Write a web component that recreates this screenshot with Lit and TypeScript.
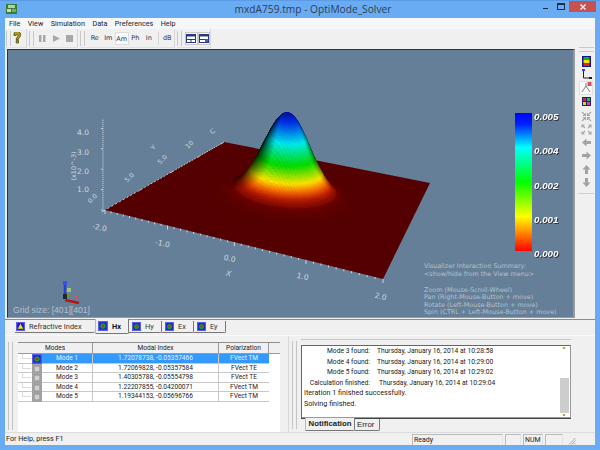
import { LitElement, css, html, svg, type TemplateResult } from 'lit';
import { customElement } from 'lit/decorators.js';

type Pt = [number, number];

// plate corners on screen: back, right, front, left
const P: Pt[] = [[224, 142], [430, 183], [383, 279], [105, 210]];
const O: Pt = [8, 50]; // origin of the svg in page coordinates

function makeHomography(p: Pt[]) {
  const [[x0, y0], [x1, y1], [x2, y2], [x3, y3]] = p;
  const dx1 = x1 - x2, dx2 = x3 - x2, dx3 = x0 - x1 + x2 - x3;
  const dy1 = y1 - y2, dy2 = y3 - y2, dy3 = y0 - y1 + y2 - y3;
  const det = dx1 * dy2 - dx2 * dy1;
  const g = (dx3 * dy2 - dx2 * dy3) / det;
  const h = (dx1 * dy3 - dx3 * dy1) / det;
  const a = x1 - x0 + g * x1, b = x3 - x0 + h * x3;
  const d = y1 - y0 + g * y1, e = y3 - y0 + h * y3;
  return (u: number, v: number): Pt => {
    const w = g * u + h * v + 1;
    return [(a * u + b * v + x0) / w, (d * u + e * v + y0) / w];
  };
}
const project = makeHomography(P);

const STOPS: [number, number, number, number][] = [
  [0, 85, 0, 0], [0.07, 104, 4, 0], [0.15, 185, 30, 0], [0.22, 250, 110, 0], [0.3, 255, 235, 0],
  [0.48, 0, 225, 0], [0.7, 0, 240, 240], [0.92, 0, 50, 235], [1, 0, 20, 170],
];

function colorAt(t: number, shade: number): string {
  let i = 0;
  while (i < STOPS.length - 2 && t > STOPS[i + 1][0]) i++;
  const a = STOPS[i], b = STOPS[i + 1];
  const f = Math.min(1, (t - a[0]) / (b[0] - a[0]));
  const c = [1, 2, 3].map((k) => Math.round((a[k] + (b[k] - a[k]) * f) * shade));
  return `rgb(${c[0]},${c[1]},${c[2]})`;
}

const SIGMA = 0.092;
const HEIGHT = 82;

function height(u: number, v: number): number {
  const du = u - 0.5, dv = v - 0.5;
  return Math.exp(-(du * du + dv * dv) / (2 * SIGMA * SIGMA));
}

function surfacePoint(u: number, v: number): Pt {
  const [x, y] = project(u, v);
  const t = height(u, v);
  return [x + 2 * t - O[0], y - HEIGHT * t - O[1]];
}

function shadeAt(u: number, v: number): number {
  const t = height(u, v);
  const k = 0.34;
  const nx = (k * t * (u - 0.5)) / (SIGMA * SIGMA);
  const ny = (k * t * (v - 0.5)) / (SIGMA * SIGMA);
  const len = Math.hypot(nx, ny, 1);
  const lit = (nx * 0.32 + ny * 0.5 + 0.8) / (len * Math.hypot(0.32, 0.5, 0.8));
  const flat = 0.8 / Math.hypot(0.32, 0.5, 0.8);
  const s = Math.max(0, lit) / flat;
  return Math.min(1, Math.pow(s, 1.7) * 1.25);
}

function buildSurface(): TemplateResult[] {
  const N = 120, lo = 0.2, span = 0.6;
  const quads: { y: number; pts: string; fill: string }[] = [];
  for (let i = 0; i < N; i++) {
    for (let j = 0; j < N; j++) {
      const u0 = lo + (span * i) / N, u1 = lo + (span * (i + 1)) / N;
      const v0 = lo + (span * j) / N, v1 = lo + (span * (j + 1)) / N;
      const um = (u0 + u1) / 2, vm = (v0 + v1) / 2;
      if (height(um, vm) < 0.004) continue; // flat enough to be the plate itself
      const pts = [surfacePoint(u0, v0), surfacePoint(u1, v0), surfacePoint(u1, v1), surfacePoint(u0, v1)]
        .map((p) => `${p[0].toFixed(1)},${p[1].toFixed(1)}`).join(' ');
      quads.push({ y: project(um, vm)[1], pts, fill: colorAt(height(um, vm), shadeAt(um, vm)) });
    }
  }
  quads.sort((a, b) => a.y - b.y);
  return quads.map((q) => svg`<polygon points=${q.pts} fill=${q.fill} stroke=${q.fill} stroke-width="0.5"></polygon>`);
}

function buildTicks(): TemplateResult[] {
  const out: TemplateResult[] = [];
  for (let i = 0; i <= 40; i++) {
    const [x, y] = project(i / 40, 1).map((n, k) => n - O[k]);
    const [x2, y2] = project(0, 1 - i / 40).map((n, k) => n - O[k]);
    const big = i % 10 === 0;
    out.push(svg`<line x1=${x} y1=${y} x2=${x} y2=${y + (big ? 4 : 2)} class="tick"></line>`);
    out.push(svg`<line x1=${x2} y1=${y2} x2=${x2 - (big ? 3 : 1.5)} y2=${y2 + (big ? 2 : 1)} class="tick"></line>`);
  }
  for (let i = 0; i <= 44; i++) {
    const y = 210 - O[1] - i * 2.04;
    out.push(svg`<line x1=${103.5 - O[0]} y1=${y} x2=${(i % 10 === 0 ? 101 : 102.4) - O[0]} y2=${y} class="tick"></line>`);
  }
  return out;
}

const plateShape = P.map((p) => `${p[0] - O[0]},${p[1] - O[1]}`).join(' ');
const surface = buildSurface();
const ticks = buildTicks();

const fieldIcon = (inner: 'field' | 'tri' | 'gray', size = 11): TemplateResult => html`
  <svg width=${size} height=${size} viewBox="0 0 11 11">
    ${inner === 'gray'
      ? svg`<rect width="11" height="11" fill="#a2a2a2"></rect><rect x="2.5" y="2.5" width="6" height="6" rx="1" fill="#d0d0d0" stroke="#8a8a8a" stroke-width=".6"></rect>`
      : svg`<rect width="11" height="11" fill="#5a5aee"></rect><rect x="1.5" y="1.5" width="8" height="8" fill="#1414d8"></rect>`}
    ${inner === 'field' ? svg`<circle cx="5.5" cy="5.5" r="3.1" fill="#10a020"></circle><circle cx="5.5" cy="5.5" r="1.3" fill="#d82020"></circle>` : ''}
    ${inner === 'tri' ? svg`<path d="M5.5 2.2 L8.8 8.4 H2.2 Z" fill="#f4e800"></path>` : ''}
  </svg>`;

const MODES = [
  ['Mode 1', '1.72078738, -0.05357466', 'FVect TM'],
  ['Mode 2', '1.72069828, -0.05357584', 'FVect TE'],
  ['Mode 3', '1.40305788, -0.05554798', 'FVect TE'],
  ['Mode 4', '1.22207855, -0.04200071', 'FVect TM'],
  ['Mode 5', '1.19344153, -0.05696766', 'FVect TM'],
];

const LOG = [
  ['Mode 3 found:', 'Thursday, January 16, 2014 at 10:28:58'],
  ['Mode 4 found:', 'Thursday, January 16, 2014 at 10:29:00'],
  ['Mode 5 found:', 'Thursday, January 16, 2014 at 10:29:02'],
  ['Calculation finished:', 'Thursday, January 16, 2014 at 10:29:04'],
];

const arrow = (rot: number): TemplateResult => html`
  <svg width="11" height="11" viewBox="0 0 11 11"><path transform="rotate(${rot} 5.5 5.5)" d="M1 5.5 L5.5 1.5 V4 H10 V7 H5.5 V9.5 Z" fill="#a3a3a3"></path></svg>`;

@customElement('app-root')
export class AppRoot extends LitElement {
  private renderPlot(): TemplateResult {
    return html`
      <svg class="plot" width="565" height="267" viewBox="0 0 565 267">
        <defs>
          <linearGradient id="bar" x1="0" y1="0" x2="0" y2="1">
            <stop offset="0" stop-color="#0000ff"></stop>
            <stop offset="0.08" stop-color="#0020ff"></stop>
            <stop offset="0.25" stop-color="#00ffff"></stop>
            <stop offset="0.5" stop-color="#00ff00"></stop>
            <stop offset="0.75" stop-color="#ffff00"></stop>
            <stop offset="1" stop-color="#ff0000"></stop>
          </linearGradient>
          <filter id="soft" x="-5%" y="-5%" width="110%" height="110%"><feGaussianBlur stdDeviation="0.7"></feGaussianBlur></filter>
        </defs>
        <polygon points=${plateShape} fill="#550000"></polygon>
        <g filter="url(#soft)">${surface}</g>
        ${ticks}
        <text class="ax" x="69" y="85">4.0</text>
        <text class="ax" x="69" y="104.5">3.0</text>
        <text class="ax" x="69" y="124">2.0</text>
        <text class="ax" x="69" y="142">1.0</text>
        <text class="ax sm" transform="translate(68 116) rotate(-90)" text-anchor="middle">(x10^-3)</text>
        <text class="ax sm" transform="translate(86 150) rotate(-45)" text-anchor="middle">0.0</text>
        <text class="ax sm" transform="translate(123 129) rotate(-45)" text-anchor="middle">5.0</text>
        <text class="ax sm" transform="translate(156 111) rotate(-45)" text-anchor="middle">5.0</text>
        <text class="ax sm" transform="translate(183 96) rotate(-45)" text-anchor="middle">10</text>
        <text class="ax sm" transform="translate(147 99) rotate(-45)" text-anchor="middle">Y</text>
        <text class="ax sm" transform="translate(206 83) rotate(-45)" text-anchor="middle">C</text>
        <text class="ax" transform="translate(91 180) rotate(12)" text-anchor="middle">-2.0</text>
        <text class="ax" transform="translate(154 196) rotate(12)" text-anchor="middle">-1.0</text>
        <text class="ax" transform="translate(221 211) rotate(12)" text-anchor="middle">0.0</text>
        <text class="ax" transform="translate(220 226) rotate(12)" text-anchor="middle" font-style="italic">X</text>
        <text class="ax" transform="translate(294 229) rotate(12)" text-anchor="middle">1.0</text>
        <text class="ax" transform="translate(372 249) rotate(12)" text-anchor="middle">2.0</text>

        <g>
          <line x1="57" y1="247" x2="57" y2="233" stroke="#2a3fd0" stroke-width="2.5"></line>
          <line x1="57" y1="250" x2="71" y2="253" stroke="#b01818" stroke-width="2.5"></line>
          <line x1="57" y1="249" x2="62" y2="243" stroke="#6f9a3a" stroke-width="2"></line>
          <rect x="55" y="244" width="4" height="5" fill="#202a20"></rect>
          <rect x="59" y="238" width="4" height="4" fill="#9fc47a"></rect>
          <rect x="67" y="245" width="3" height="4" fill="#e05050"></rect>
          <rect x="55" y="231" width="4" height="4" fill="#3a50e8"></rect>
        </g>

        <rect x="507" y="63" width="17" height="138" fill="url(#bar)"></rect>
        <text class="bar-label" x="526" y="70">0.005</text>
        <text class="bar-label" x="526" y="104">0.004</text>
        <text class="bar-label" x="526" y="139">0.002</text>
        <text class="bar-label" x="526" y="173">0.001</text>
        <text class="bar-label" x="526" y="207">0.000</text>

        <text class="note" x="416" y="218">Visualizer Interaction Summary:</text>
        <text class="note" x="416" y="225.5">&lt;show/hide from the View menu&gt;</text>
        <text class="note" x="416" y="242">Zoom (Mouse-Scroll-Wheel)</text>
        <text class="note" x="416" y="249">Pan (Right-Mouse-Button + move)</text>
        <text class="note" x="416" y="257">Rotate (Left-Mouse-Button + move)</text>
        <text class="note" x="416" y="264">Spin (CTRL + Left-Mouse-Button + move)</text>
        <text class="note grid" x="5" y="263">Grid size: [401][401]</text>
      </svg>`;
  }

  private renderToolbar(): TemplateResult {
    return html`
      <div class="toolbar">
        <div class="tgroup g-key">
          <i class="grip"></i>
          <svg width="9" height="12" viewBox="0 0 9 12"><path d="M1 3.5 A3.4 3.4 0 1 1 7.5 3.5 C7.5 5.5 5.5 5.5 5.5 7.5 H3.2 C3.2 5 5 5 5 3.5 A1 1 0 0 0 3 3.5 Z M3.2 8.5 H5.5 V11 H3.2 Z" fill="#b09a18" stroke="#3c3c00" stroke-width=".7"></path></svg>
        </div>
        <div class="tgroup g-run">
          <i class="grip"></i>
          <span class="gbtn"><svg width="7" height="7"><rect x="0" y="0" width="2.5" height="7" fill="#a8a8a8"></rect><rect x="4" y="0" width="2.5" height="7" fill="#a8a8a8"></rect></svg></span>
          <span class="gbtn"><svg width="7" height="7"><path d="M0 0 L7 3.5 L0 7 Z" fill="#a8a8a8"></path></svg></span>
          <span class="gbtn"><svg width="7" height="7"><rect width="7" height="7" fill="#a8a8a8"></rect></svg></span>
        </div>
        <div class="tgroup g-parts">
          <i class="grip"></i>
          <span class="tbtn">Re</span><span class="tbtn">Im</span><span class="tbtn on">Am</span><span class="tbtn">Ph</span><span class="tbtn">In</span>
          <i class="vsep"></i>
          <span class="tbtn">dB</span>
        </div>
        <div class="tgroup g-layout">
          <i class="grip"></i>
          <span class="lbtn"><svg width="10" height="9" viewBox="0 0 10 9"><rect x=".5" y=".5" width="9" height="8" fill="#fff" stroke="#2a3a80"></rect><rect x=".5" y=".5" width="9" height="2" fill="#2a3a80"></rect><line x1="0" y1="5.5" x2="10" y2="5.5" stroke="#2a3a80"></line><line x1="5" y1="5.5" x2="5" y2="9" stroke="#2a3a80"></line></svg></span>
          <span class="lbtn"><svg width="10" height="9" viewBox="0 0 10 9"><rect x=".5" y=".5" width="9" height="8" fill="#fff" stroke="#2a3a80"></rect><rect x=".5" y=".5" width="9" height="2" fill="#2a3a80"></rect><line x1="0" y1="5.5" x2="6" y2="5.5" stroke="#2a3a80"></line><rect x="6" y="5" width="3" height="3" fill="#4060c0"></rect></svg></span>
        </div>
      </div>`;
  }

  private renderSideBar(): TemplateResult {
    return html`
      <div class="sidebar">
        <i class="hgrip"></i>
        <span class="sbtn"><svg width="9" height="11" viewBox="0 0 9 11"><rect width="9" height="11" fill="#14148c"></rect><rect x="1.5" y="1" width="6" height="3" fill="#10b020"></rect><rect x="1.5" y="4" width="6" height="3" fill="#f0e000"></rect><rect x="1.5" y="7" width="6" height="3" fill="#e02010"></rect></svg></span>
        <span class="sbtn"><svg width="11" height="11" viewBox="0 0 11 11"><path d="M2.5 1 V9 H10" fill="none" stroke="#202020"></path><rect x="1" y="0" width="3" height="2" fill="#3040d0"></rect><rect x="8" y="8" width="3" height="2" fill="#202020"></rect></svg></span>
        <span class="sbtn on"><svg width="11" height="11" viewBox="0 0 11 11"><path d="M5 4 L1 10 M5 4 L9 10 M5 4 V1" fill="none" stroke="#808080"></path><rect x="6.5" y="0" width="4" height="4" fill="#e05060"></rect></svg></span>
        <span class="sbtn"><svg width="9" height="9" viewBox="0 0 9 9"><rect width="9" height="9" fill="#202080"></rect><rect x="1" y="1" width="3" height="3" fill="#e02020"></rect><rect x="5" y="1" width="3" height="3" fill="#20c030"></rect><rect x="1" y="5" width="3" height="3" fill="#e0d020"></rect><rect x="5" y="5" width="3" height="3" fill="#e04080"></rect></svg></span>
        <span class="sbtn nudge"><svg width="11" height="11" viewBox="0 0 11 11"><path d="M1 1 L4.5 4.5 M10 1 L6.5 4.5 M1 10 L4.5 6.5 M10 10 L6.5 6.5 M4.5 2 V4.5 H2 M6.5 2 V4.5 H9 M4.5 9 V6.5 H2 M6.5 9 V6.5 H9" fill="none" stroke="#a8a8a8" stroke-width="1.1"></path></svg></span>
        <span class="sbtn"><svg width="11" height="11" viewBox="0 0 11 11"><path d="M4 4 L1 1 M7 4 L10 1 M4 7 L1 10 M7 7 L10 10 M1 3.5 V1 H3.5 M7.5 1 H10 V3.5 M1 7.5 V10 H3.5 M7.5 10 H10 V7.5" fill="none" stroke="#a8a8a8" stroke-width="1.1"></path></svg></span>
        <span class="sbtn">${arrow(0)}</span>
        <span class="sbtn">${arrow(180)}</span>
        <span class="sbtn">${arrow(90)}</span>
        <span class="sbtn">${arrow(-90)}</span>
      </div>`;
  }

  private renderTable(): TemplateResult {
    return html`
      <div class="table">
        <div class="thead">
          <span class="h-name">Modes</span>
          <span class="h-index">Modal Index</span>
          <span class="h-pol">Polarization</span>
          <span class="fill"></span>
        </div>
        ${MODES.map((m, i) => html`
          <div class="trow ${i === 0 ? 'sel' : ''}">
            <span class="tree"><i class="branch"></i>${fieldIcon(i === 0 ? 'field' : 'gray', 10)}</span>
            <span class="c-name">${m[0]}</span>
            <span class="c-index">${m[1]}</span>
            <span class="c-pol">${m[2]}</span>
          </div>`)}
      </div>`;
  }

  private renderLog(): TemplateResult {
    return html`
      <div class="logwrap">
        <div class="log">
          <div class="lines">
            ${LOG.map((l) => html`<div class="line"><span class="lbl">${l[0]}</span><span>${l[1]}</span></div>`)}
            <div class="line plain">Iteration 1 finished successfully.</div>
            <div class="line plain">Solving finished.</div>
          </div>
          <div class="scroll">
            <span class="caret">&#x2C4;</span>
            <span class="thumb"></span>
            <span class="caret">&#x2C5;</span>
          </div>
        </div>
        <div class="logtabs">
          <span class="ltab on">Notification</span>
          <span class="ltab err">Error</span>
        </div>
      </div>`;
  }

  override render(): TemplateResult {
    return html`
      <div class="titlebar">
        <svg class="appicon" width="11" height="10" viewBox="0 0 11 10"><rect width="11" height="10" fill="#3b7a3f"></rect><rect x="2" y="1" width="7" height="3" fill="#a8d8a0"></rect><rect x="1" y="5" width="4" height="3" fill="#e0e070"></rect><rect x="6" y="5" width="4" height="3" fill="#6fb06f"></rect></svg>
        <span class="title">mxdA759.tmp - OptiMode_Solver</span>
        <span class="winbtn"><i class="min"></i></span>
        <span class="winbtn"><i class="max"></i></span>
        <span class="close"><svg width="6" height="6"><path d="M.5 .5 L5.5 5.5 M5.5 .5 L.5 5.5" stroke="#fff" stroke-width="1.3"></path></svg></span>
      </div>
      <div class="client">
        <div class="menu">
          ${['File', 'View', 'Simulation', 'Data', 'Preferences', 'Help'].map((m) => html`<span>${m}</span>`)}
        </div>
        ${this.renderToolbar()}
        <div class="main">
          <div class="view">${this.renderPlot()}</div>
          ${this.renderSideBar()}
        </div>
        <div class="tabs">
          <span class="tab wide">${fieldIcon('tri', 9)}Refractive Index</span>
          <span class="tab on">${fieldIcon('field', 10)}Hx</span>
          <span class="tab hy">${fieldIcon('field', 9)}Hy</span>
          <span class="tab">${fieldIcon('field', 9)}Ex</span>
          <span class="tab">${fieldIcon('field', 9)}Ey</span>
        </div>
        <div class="panes">
          <div class="pane-left"><i class="pgrip"></i>${this.renderTable()}</div>
          <div class="split"><i class="pgrip"></i></div>
          <div class="pane-right">${this.renderLog()}</div>
        </div>
        <div class="status">
          <span class="help">For Help, press F1</span>
          <span class="cell c-ready">Ready</span>
          <span class="cell c-a"></span>
          <span class="cell c-num">NUM</span>
          <span class="cell c-b"></span>
          <svg class="sizer" width="8" height="8" viewBox="0 0 8 8"><path d="M7.5 1 L1 7.5 M7.5 3.5 L3.5 7.5 M7.5 6 L6 7.5" stroke="#a8a8a8"></path></svg>
        </div>
      </div>
    `;
  }

  static override styles = css`
    :host {
      display: flex;
      flex-direction: column;
      width: 600px;
      height: 450px;
      background: #6aacf4;
      font-family: Roboto, 'Liberation Sans', sans-serif;
      font-size: 7px;
      color: #222;
      overflow: hidden;
    }
    i { display: block; font-style: normal; }

    .titlebar {
      height: 18px;
      display: flex;
      align-items: flex-start;
      box-sizing: border-box;
      padding-left: 6px;
      border-top: 1px solid #5a9be4;
    }
    .appicon { margin-top: 3px; }
    .title {
      flex: 1;
      text-align: center;
      font-family: 'Open Sans', sans-serif;
      font-size: 10.2px;
      line-height: 17px;
      color: #2c3e55;
      padding-left: 72px;
    }
    .winbtn { width: 16px; height: 11px; display: flex; align-items: center; justify-content: center; }
    .min { width: 5px; height: 1.5px; background: #1c2c40; margin-top: 4px; }
    .max { width: 6px; height: 4px; border: 1px solid #1c2c40; border-top-width: 2px; }
    .close {
      width: 27px;
      height: 11px;
      margin-right: 4px;
      background: #c75050;
      display: flex;
      align-items: center;
      justify-content: center;
    }

    .client {
      flex: 1;
      margin: 0 5px 5px;
      display: flex;
      flex-direction: column;
      background: #f0f0f0;
      min-height: 0;
    }
    .menu {
      height: 11px;
      background: #f5f6f7;
      display: flex;
      padding-left: 4px;
      gap: 7.5px;
      line-height: 11px;
      font-size: 7.2px;
    }

    .toolbar { height: 20px; display: flex; gap: 2px; padding-left: 1px; box-sizing: border-box; }
    .tgroup {
      height: 19px;
      display: flex;
      align-items: center;
      box-sizing: border-box;
      border-right: 1px solid #d8d8d8;
      border-bottom: 1px solid #e0e0e0;
      flex: none;
    }
    .g-key { width: 21px; }
    .g-run { width: 49px; }
    .g-parts { width: 95px; }
    .g-layout { width: 34px; }
    .grip { width: 3px; height: 15px; border-left: 1px solid #c8c8c8; border-right: 1px solid #c8c8c8; margin-right: 2px; flex: none; }
    .g-parts .grip, .g-layout .grip { margin-right: 3px; }
    .gbtn { width: 13.5px; display: flex; justify-content: center; }
    .tbtn {
      width: 13.5px;
      height: 13px;
      line-height: 13px;
      text-align: center;
      font-family: 'DejaVu Sans', sans-serif;
      font-size: 6.5px;
      color: #333;
      box-sizing: border-box;
      flex: none;
    }
    .tbtn.on { background: #fbfbfb; border: 1px solid #dcdcdc; line-height: 12px; }
    .vsep { width: 1px; height: 13px; background: #d4d4d4; margin: 0 2px; flex: none; }
    .lbtn {
      width: 13px;
      height: 13px;
      display: flex;
      align-items: center;
      justify-content: center;
      border: 1px solid #c8c8c8;
      box-sizing: border-box;
      background: #f8f8f8;
    }

    .main { height: 270px; display: flex; }
    .view {
      width: 568px;
      height: 269px;
      margin-left: 2px;
      box-sizing: border-box;
      border: 1px solid #9a9a9a;
      border-top-color: #333;
      border-left-color: #333;
      border-right-width: 2px;
      background: #667f99;
      flex: none;
    }
    .plot { display: block; }
    .tick { stroke: #e6ebf0; stroke-width: 0.8; }
    .ax { fill: #cfd7df; font-family: 'DejaVu Sans', sans-serif; font-size: 7.5px; }
    .ax.sm { font-size: 6.5px; }
    .bar-label {
      fill: #fff;
      font-family: 'Liberation Sans', sans-serif;
      font-size: 9.8px;
      font-weight: bold;
      font-style: italic;
      filter: drop-shadow(1px 1px 0 #30363e);
    }
    .note { fill: #b4c0cc; font-family: 'DejaVu Sans', sans-serif; font-size: 6.4px; }
    .note.grid { font-family: 'Liberation Sans', sans-serif; font-size: 8.6px; }

    .sidebar {
      width: 16px;
      height: 147px;
      margin: -2px 0 0 3px;
      display: flex;
      flex-direction: column;
      align-items: center;
      border-bottom: 1px solid #d0d0d0;
      box-sizing: border-box;
      flex: none;
    }
    .hgrip { width: 15px; height: 3px; border-top: 1px solid #c8c8c8; border-bottom: 1px solid #c8c8c8; margin-bottom: 3px; flex: none; }
    .sbtn { height: 13.2px; width: 14px; display: flex; align-items: center; justify-content: center; flex: none; box-sizing: border-box; }
    .sbtn.on { background: #fafafa; border: 1px solid #e0e0e0; }
    .sbtn.nudge { margin-top: 2px; }

    .tabs { height: 16px; display: flex; padding-left: 10px; box-sizing: border-box; align-items: flex-start; border-top: 1px solid #8c8c8c; }
    .tab {
      width: 32px;
      height: 12px;
      margin-top: 1px;
      display: flex;
      align-items: center;
      gap: 4px;
      padding-left: 3px;
      box-sizing: border-box;
      border-right: 1px solid #777;
      border-bottom: 1px solid #777;
      border-bottom-right-radius: 2px;
      color: #333;
      font-size: 7.4px;
      white-space: nowrap;
    }
    .tab.wide { width: 80px; padding-left: 1px; border-right: none; }
    .tab.on { width: 34px; height: 15px; margin-top: -1px; padding-left: 2px; font-weight: bold; background: #f0f0f0; border-left: 1px solid #bbb; color: #111; }
    .tab.hy { width: 33px; }

    .panes { height: 97px; display: flex; border-top: 1px solid #f8f8f8; box-sizing: border-box; }
    .pane-left { width: 283px; display: flex; padding: 6px 0 0 3px; box-sizing: border-box; flex: none; }
    .pgrip { width: 3px; height: 88px; border-left: 1px solid #c4c4c4; border-right: 1px solid #c4c4c4; margin-right: 5px; flex: none; }
    .split { width: 13px; padding: 5px 0 0 3px; box-sizing: border-box; border-left: 1px solid #d8d8d8; flex: none; }
    .pane-right { flex: 1; min-width: 0; padding-top: 3px; }

    .table { width: 262px; height: 90px; background: #fff; flex: none; overflow: hidden; }
    .thead { height: 12px; display: flex; background: #f0f0f0; border-top: 1px solid #8e8e8e; box-sizing: border-box; }
    .thead span {
      box-sizing: border-box;
      text-align: center;
      line-height: 11px;
      border-right: 1px solid #9a9a9a;
      border-bottom: 1px solid #9a9a9a;
      flex: none;
      font-size: 6.6px;
    }
    .thead .h-name { width: 75px; }
    .thead .h-index { width: 126px; }
    .thead .h-pol { width: 50px; }
    .thead .fill { flex: 1; border-right: none; }
    .trow {
      height: 9.6px;
      width: 251px;
      display: flex;
      line-height: 9px;
      font-size: 6.6px;
      border-bottom: 1px solid #c8c8c8;
      box-sizing: border-box;
    }
    .tree { width: 24px; flex: none; display: flex; justify-content: flex-end; }
    .branch { width: 9px; height: 5px; margin-right: 1px; border-bottom: 1px solid #dcdcdc; border-left: 1px solid #dcdcdc; box-sizing: border-box; flex: none; }
    .c-name { width: 51px; text-align: center; flex: none; box-sizing: border-box; border-right: 1px solid #c8c8c8; }
    .c-index { width: 126px; text-align: center; flex: none; box-sizing: border-box; border-right: 1px solid #c8c8c8; }
    .c-pol { flex: 1; text-align: center; }
    .trow.sel .c-name, .trow.sel .c-index, .trow.sel .c-pol { background: #3399ff; color: #e8f2ff; }

    .logwrap { width: 270px; border-top: 1px solid #c8c8c8; padding-top: 5px; }
    .log {
      height: 73px;
      display: flex;
      background: #fff;
      border: 1px solid #666;
      border-right-color: #999;
      border-bottom-color: #999;
      box-sizing: border-box;
    }
    .lines { flex: 1; padding: 0 0 0 2px; }
    .line { height: 10.6px; line-height: 10.6px; display: flex; font-size: 6.7px; white-space: nowrap; }
    .line.plain { display: block; font-size: 7.2px; }
    .lbl { width: 66px; text-align: right; margin-right: 7px; flex: none; }
    .line:nth-child(4) .lbl { margin-right: 9px; }
    .scroll { width: 12px; display: flex; flex-direction: column; align-items: center; flex: none; }
    .caret { height: 10px; line-height: 10px; font-size: 9px; color: #444; font-family: 'DejaVu Sans', sans-serif; }
    .thumb { width: 9px; height: 35px; background: #cdcdcd; margin-top: 22px; flex: none; }

    .logtabs { display: flex; padding-left: 4px; border-top: 1px solid #444; }
    .ltab {
      height: 12px;
      line-height: 11px;
      padding: 0 2px;
      box-sizing: border-box;
      border-right: 1px solid #777;
      border-bottom: 1px solid #777;
      border-bottom-right-radius: 2px;
      font-family: 'Liberation Sans', sans-serif;
      font-size: 7.8px;
    }
    .ltab.on { width: 50px; height: 13px; margin-top: -1px; text-align: center; font-weight: bold; border-left: 1px solid #bbb; background: #f0f0f0; }
    .ltab.err { width: 25px; }

    .status { height: 13px; display: flex; align-items: flex-end; border-top: 1px solid #dcdcdc; box-sizing: border-box; gap: 2px; }
    .help { width: 405px; padding-left: 1px; line-height: 12px; font-size: 7.2px; flex: none; box-sizing: border-box; }
    .cell {
      height: 11px;
      line-height: 10px;
      box-sizing: border-box;
      border-top: 1px solid #bbb;
      border-left: 1px solid #bbb;
      border-right: 1px solid #e4e4e4;
      padding-left: 1px;
      flex: none;
      font-size: 7px;
    }
    .c-ready { width: 91px; }
    .c-a { width: 16px; }
    .c-num { width: 20px; }
    .c-b { width: 18px; }
    .sizer { margin-left: 3px; }
  `;
}

declare global {
  interface HTMLElementTagNameMap {
    'app-root': AppRoot;
  }
}
